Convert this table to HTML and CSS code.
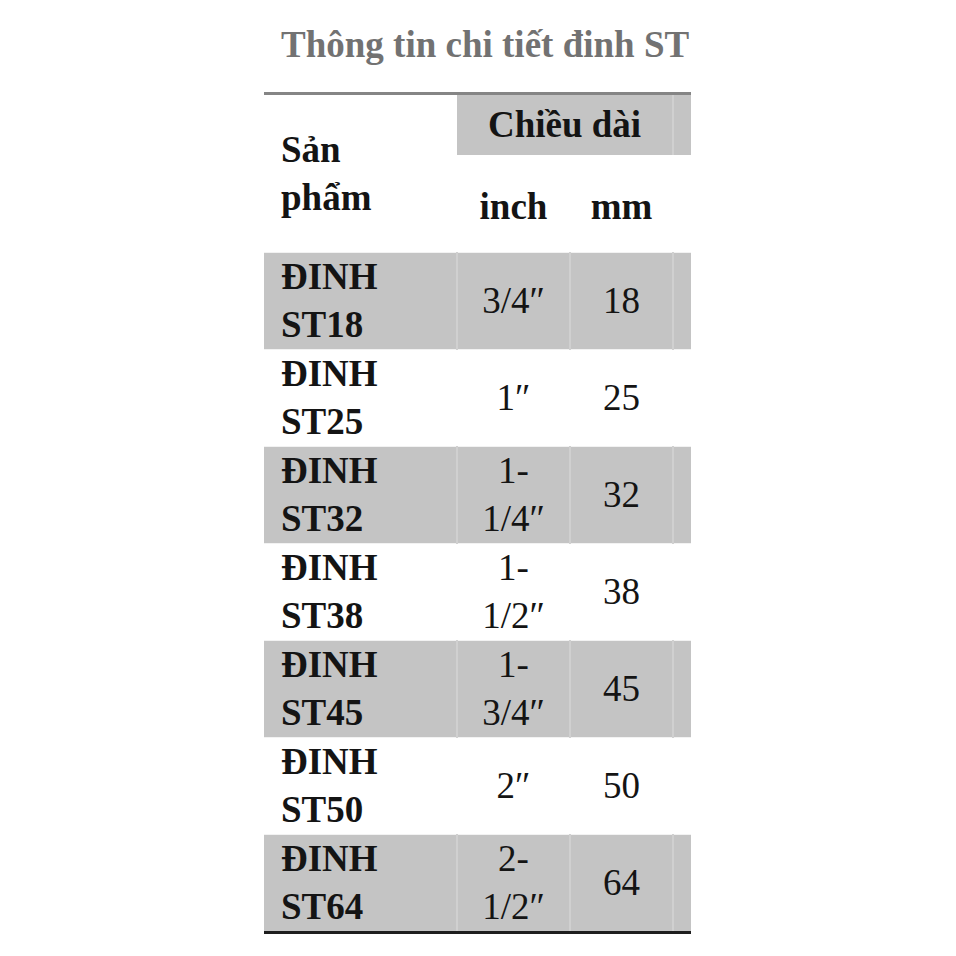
FILE: index.html
```html
<!DOCTYPE html>
<html lang="vi">
<head>
<meta charset="utf-8">
<link rel="stylesheet" href="styles.css">
</head>
<body>
<div class="wrap">
  <h2 class="title">Thông tin chi tiết đinh ST</h2>
  <table class="spec">
    <colgroup>
      <col class="c1"><col class="c2"><col class="c3"><col class="c4">
    </colgroup>
    <thead>
      <tr class="h1">
        <th rowspan="2" class="prod">Sản<br>phẩm</th>
        <th colspan="2" class="shade">Chiều dài</th>
        <th class="shade sep"></th>
      </tr>
      <tr class="h2">
        <th class="sub">inch</th>
        <th class="sub">mm</th>
        <th class="sub"></th>
      </tr>
    </thead>
    <tbody>
      <tr class="odd"><td class="name">ĐINH<br>ST18</td><td class="sep">3/4″</td><td class="sep">18</td><td class="sep"></td></tr>
      <tr><td class="name">ĐINH<br>ST25</td><td class="sep">1″</td><td class="sep">25</td><td class="sep"></td></tr>
      <tr class="odd"><td class="name">ĐINH<br>ST32</td><td class="sep">1-<br>1/4″</td><td class="sep">32</td><td class="sep"></td></tr>
      <tr><td class="name">ĐINH<br>ST38</td><td class="sep">1-<br>1/2″</td><td class="sep">38</td><td class="sep"></td></tr>
      <tr class="odd"><td class="name">ĐINH<br>ST45</td><td class="sep">1-<br>3/4″</td><td class="sep">45</td><td class="sep"></td></tr>
      <tr><td class="name">ĐINH<br>ST50</td><td class="sep">2″</td><td class="sep">50</td><td class="sep"></td></tr>
      <tr class="odd last"><td class="name">ĐINH<br>ST64</td><td class="sep">2-<br>1/2″</td><td class="sep">64</td><td class="sep"></td></tr>
    </tbody>
  </table>
</div>
</body>
</html>
```

FILE: styles.css
```css
html, body {
  margin: 0;
  padding: 0;
  background: #ffffff;
}

body {
  font-family: "Liberation Serif", "Times New Roman", serif;
  color: #141414;
}

.wrap {
  margin-left: 264px;
  width: 427px;
  overflow: hidden;
  padding-top: 21px;
}

.title {
  margin: 0 0 23px 0;
  padding-left: 17px;
  font-size: 37px;
  line-height: 48px;
  font-weight: bold;
  color: #727272;
  white-space: nowrap;
}

.spec {
  width: 469px;
  table-layout: fixed;
  border-collapse: collapse;
  border-top: 3px solid #858585;
  border-bottom: 3px solid #1e1e1e;
  font-size: 37px;
  line-height: 48px;
}

.c1 { width: 193px; }
.c2 { width: 113px; }
.c3 { width: 103px; }
.c4 { width: 60px; }

.spec th,
.spec td {
  padding: 0;
  text-align: center;
  vertical-align: middle;
}

.spec th {
  font-weight: bold;
}

.h1 th {
  height: 60px;
}

.h2 th {
  height: 91px;
  padding-top: 6px;
}

.shade {
  background: #c4c4c4;
}

.spec th.prod {
  text-align: left;
  padding-left: 17px;
}

.spec tbody tr {
  border-top: 1px solid #f2f2f2;
}

.spec tbody td {
  height: 96px;
  font-weight: normal;
}

.spec tbody td.name {
  text-align: left;
  padding-left: 17px;
  font-weight: bold;
}

.spec tr.odd td {
  background: #c4c4c4;
}

.spec tr.odd td.sep,
.spec th.sep {
  border-left: 2px solid #d0d0d0;
}
```
